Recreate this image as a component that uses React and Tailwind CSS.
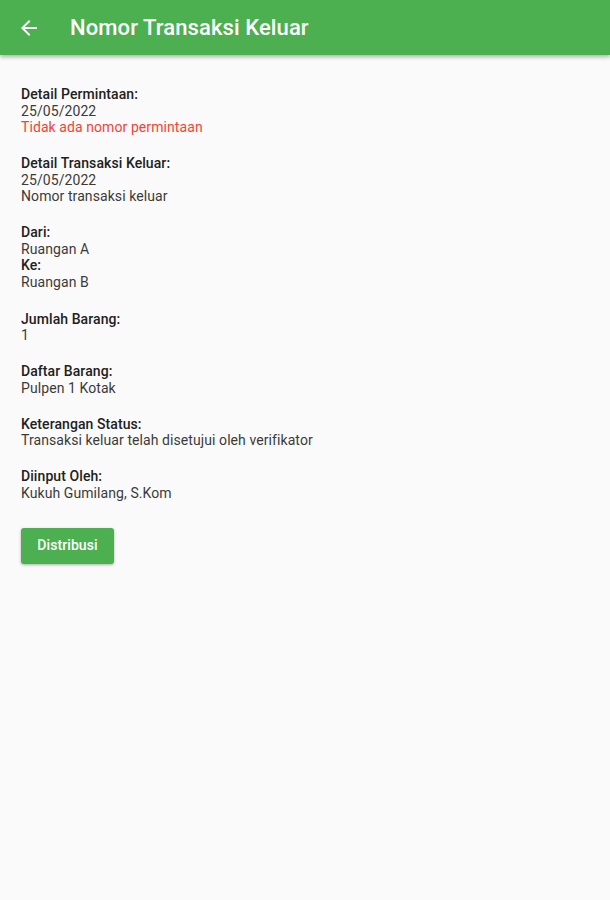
import React from "react";

function Section({ children, className = "" }) {
  return <div className={"flex flex-col " + className}>{children}</div>;
}
function Label({ children }) {
  return <div className="font-medium text-[#212121]">{children}</div>;
}
function Value({ children, red }) {
  return <div className={red ? "text-[#f44336]" : "text-[#3a3a3a]"}>{children}</div>;
}

export default function App() {
  return (
    <div className="min-h-[900px] w-[610px] bg-[#fafafa]" style={{ fontFamily: "Roboto, 'Noto Sans', sans-serif" }}>
      <div className="flex h-[55px] items-center bg-[#4caf50] shadow-[0_2px_4px_rgba(0,0,0,0.3)]">
        <div className="ml-[17px] flex h-6 w-6 items-center justify-center">
          <svg width="24" height="24" viewBox="0 0 24 24" fill="white">
            <path d="M20 11H7.83l5.59-5.59L12 4l-8 8 8 8 1.41-1.41L7.83 13H20v-2z" />
          </svg>
        </div>
        <div className="ml-[29px] text-[22px] font-medium tracking-[0.1px] text-white">Nomor Transaksi Keluar</div>
      </div>
      <div className="flex flex-col gap-[19.5px] px-[21px] pt-[31px] text-[14px] leading-[16.5px] tracking-[0.08px]">
        <Section>
          <Label>Detail Permintaan:</Label>
          <Value>25/05/2022</Value>
          <Value red>Tidak ada nomor permintaan</Value>
        </Section>
        <Section>
          <Label>Detail Transaksi Keluar:</Label>
          <Value>25/05/2022</Value>
          <Value>Nomor transaksi keluar</Value>
        </Section>
        <Section>
          <Label>Dari:</Label>
          <Value>Ruangan A</Value>
          <Label>Ke:</Label>
          <Value>Ruangan B</Value>
        </Section>
        <Section className="mt-[1px]">
          <Label>Jumlah Barang:</Label>
          <Value>1</Value>
        </Section>
        <Section>
          <Label>Daftar Barang:</Label>
          <Value>Pulpen 1 Kotak</Value>
        </Section>
        <Section>
          <Label>Keterangan Status:</Label>
          <Value>Transaksi keluar telah disetujui oleh verifikator</Value>
        </Section>
        <Section>
          <Label>Diinput Oleh:</Label>
          <Value>Kukuh Gumilang, S.Kom</Value>
        </Section>
        <div className="mt-[7px]">
          <button className="flex h-[36px] w-[93px] items-center justify-center rounded-[3px] bg-[#4caf50] text-[14px] font-medium text-white shadow-[0_1px_3px_rgba(0,0,0,0.3)]">
            Distribusi
          </button>
        </div>
      </div>
    </div>
  );
}
